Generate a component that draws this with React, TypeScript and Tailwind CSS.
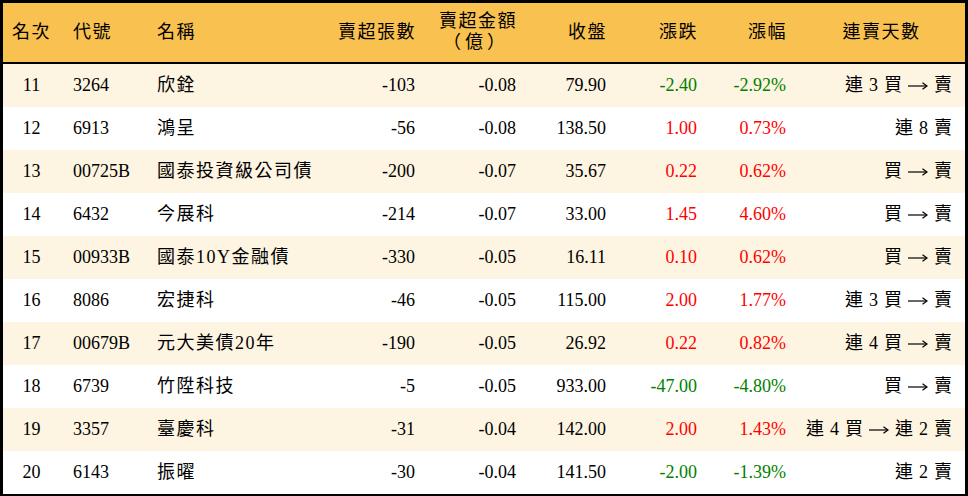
const rows = [
  { no: 11, code: "3264", name: "欣銓", lots: "-103", amt: "-0.08", close: "79.90", chg: "-2.40", pct: "-2.92%", days: ["連", "3", "買", "→", "賣"] },
  { no: 12, code: "6913", name: "鴻呈", lots: "-56", amt: "-0.08", close: "138.50", chg: "1.00", pct: "0.73%", days: ["連", "8", "賣"] },
  { no: 13, code: "00725B", name: "國泰投資級公司債", lots: "-200", amt: "-0.07", close: "35.67", chg: "0.22", pct: "0.62%", days: ["買", "→", "賣"] },
  { no: 14, code: "6432", name: "今展科", lots: "-214", amt: "-0.07", close: "33.00", chg: "1.45", pct: "4.60%", days: ["買", "→", "賣"] },
  { no: 15, code: "00933B", name: "國泰10Y金融債", lots: "-330", amt: "-0.05", close: "16.11", chg: "0.10", pct: "0.62%", days: ["買", "→", "賣"] },
  { no: 16, code: "8086", name: "宏捷科", lots: "-46", amt: "-0.05", close: "115.00", chg: "2.00", pct: "1.77%", days: ["連", "3", "買", "→", "賣"] },
  { no: 17, code: "00679B", name: "元大美債20年", lots: "-190", amt: "-0.05", close: "26.92", chg: "0.22", pct: "0.82%", days: ["連", "4", "買", "→", "賣"] },
  { no: 18, code: "6739", name: "竹陞科技", lots: "-5", amt: "-0.05", close: "933.00", chg: "-47.00", pct: "-4.80%", days: ["買", "→", "賣"] },
  { no: 19, code: "3357", name: "臺慶科", lots: "-31", amt: "-0.04", close: "142.00", chg: "2.00", pct: "1.43%", days: ["連", "4", "買", "→", "連", "2", "賣"] },
  { no: 20, code: "6143", name: "振曜", lots: "-30", amt: "-0.04", close: "141.50", chg: "-2.00", pct: "-1.39%", days: ["連", "2", "賣"] },
];

function Days({ parts }: { parts: string[] }) {
  return (
    <div className="flex justify-end items-center gap-[6px]">
      {parts.map((p, i) =>
        p === "→" ? (
          <svg key={i} width="20" height="10" viewBox="0 0 20 10" className="mt-[1px]">
            <path d="M0 5H18.5" stroke="black" strokeWidth="1.2" />
            <path d="M14.5 1.8L19 5L14.5 8.2" stroke="black" strokeWidth="1.2" fill="none" />
          </svg>
        ) : (
          <span key={i}>{p}</span>
        )
      )}
    </div>
  );
}

export default function App() {
  return (
    <div
      className="w-[968px] h-[496px] bg-white text-black border-t-[3px] border-b-2 border-x-[3px] border-black"
      style={{ fontFamily: '"Liberation Serif", "Noto Sans CJK TC", serif' }}
    >
      <table className="table-fixed border-separate border-spacing-0 w-[962px] text-[18px]">
        <colgroup>
          <col className="w-[57px]" />
          <col className="w-[85px]" />
          <col className="w-[185px]" />
          <col className="w-[95px]" />
          <col className="w-[101px]" />
          <col className="w-[90px]" />
          <col className="w-[91px]" />
          <col className="w-[89px]" />
          <col className="w-[169px]" />
        </colgroup>
        <thead>
          <tr className="bg-[#f9c14f] tracking-[1.5px]">
            <th className="h-[61px] border-b-2 border-black font-normal text-center">名次</th>
            <th className="border-b-2 border-black font-normal text-left pl-[13px]">代號</th>
            <th className="border-b-2 border-black font-normal text-left pl-[12px]">名稱</th>
            <th className="border-b-2 border-black font-normal text-right pr-[9px]">賣超張數</th>
            <th className="border-b-2 border-black font-normal text-right pr-[9px] leading-[21px] pb-[2px]">
              <div>賣超金額</div>
              <div className="pr-[8px] tracking-[4px]">（億）</div>
            </th>
            <th className="border-b-2 border-black font-normal text-right pr-[9px]">收盤</th>
            <th className="border-b-2 border-black font-normal text-right pr-[9px]">漲跌</th>
            <th className="border-b-2 border-black font-normal text-right pr-[9px]">漲幅</th>
            <th className="border-b-2 border-black font-normal text-center pl-[2px]">連賣天數</th>
          </tr>
        </thead>
        <tbody>
          {rows.map((r, i) => {
            const up = !r.chg.startsWith("-");
            const clr = up ? "text-[#ff0000]" : "text-[#008000]";
            return (
              <tr key={r.no} className={i % 2 === 0 ? "bg-[#fdf4e1]" : "bg-white"}>
                <td className="h-[43px] text-center">{r.no}</td>
                <td className="text-left pl-[13px]">{r.code}</td>
                <td className="text-left pl-[12px] tracking-[1.5px]">{r.name}</td>
                <td className="text-right pr-[10px]">{r.lots}</td>
                <td className="text-right pr-[10px]">{r.amt}</td>
                <td className="text-right pr-[10px]">{r.close}</td>
                <td className={`text-right pr-[10px] ${clr}`}>{r.chg}</td>
                <td className={`text-right pr-[10px] ${clr}`}>{r.pct}</td>
                <td className="text-right pr-[13px]">
                  <Days parts={r.days} />
                </td>
              </tr>
            );
          })}
        </tbody>
      </table>
    </div>
  );
}
